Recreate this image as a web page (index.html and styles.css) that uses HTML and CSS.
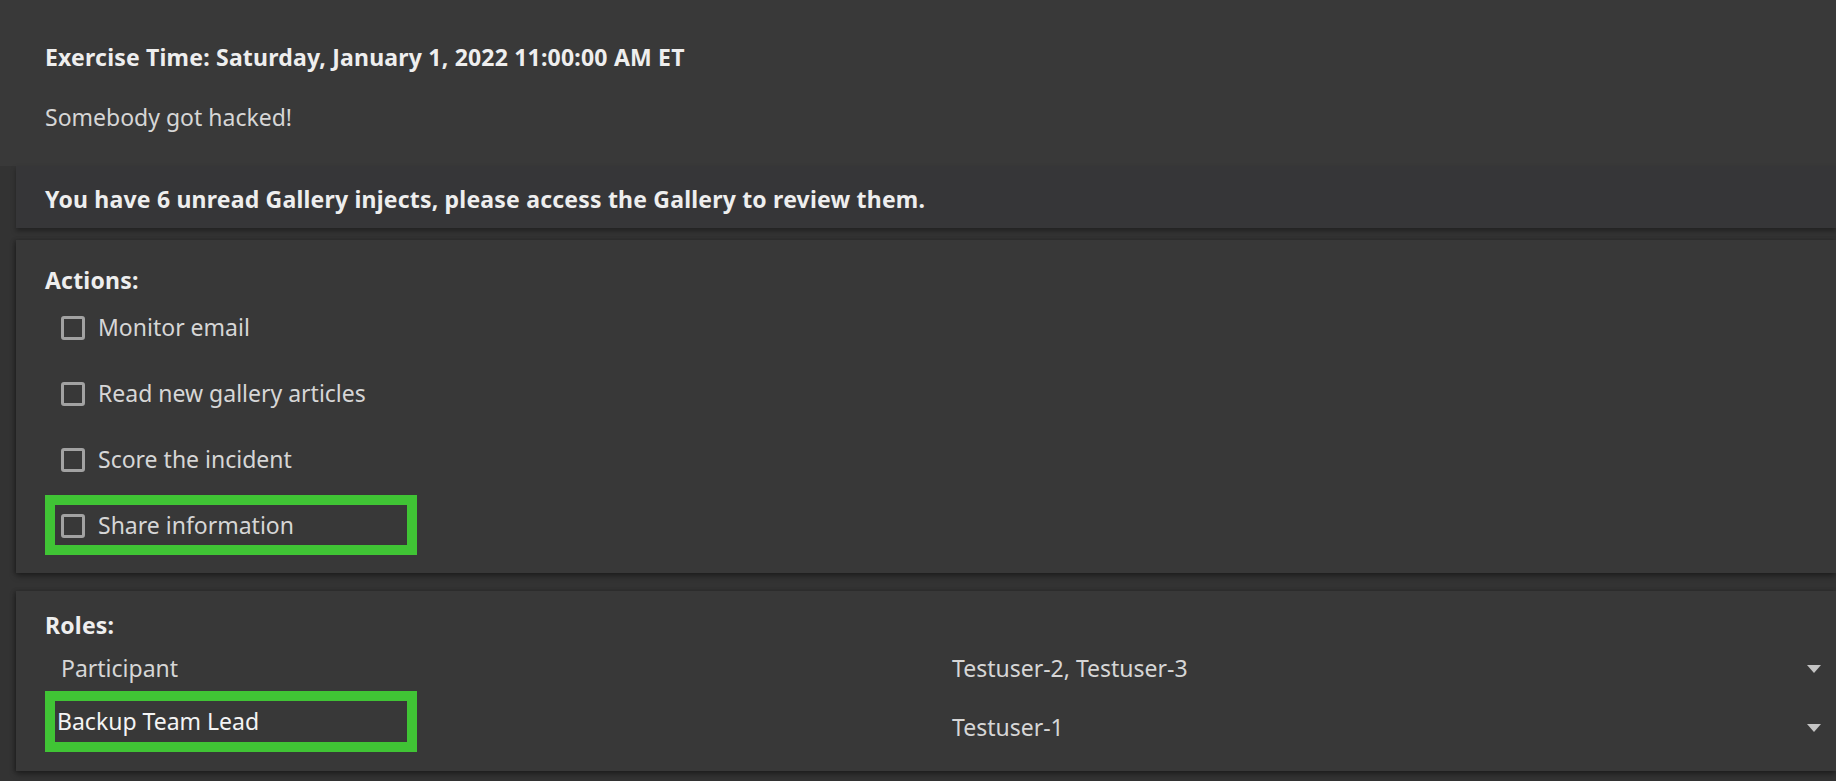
FILE: index.html
```html
<!DOCTYPE html>
<html lang="en">
<head>
<meta charset="utf-8">
<title>Exercise</title>
<link rel="stylesheet" href="styles.css">
</head>
<body>
  <div class="top">
    <p class="time">Exercise Time: Saturday, January 1, 2022 11:00:00 AM ET</p>
    <p class="msg">Somebody got hacked!</p>
  </div>

  <div class="inject">You have 6 unread Gallery injects, please access the Gallery to review them.</div>

  <section class="card actions">
    <h3 class="card-title">Actions:</h3>
    <ul class="action-list">
      <li class="action"><span class="box"></span><span class="label">Monitor email</span></li>
      <li class="action"><span class="box"></span><span class="label">Read new gallery articles</span></li>
      <li class="action"><span class="box"></span><span class="label">Score the incident</span></li>
      <li class="action"><span class="highlight hl-action"></span><span class="box"></span><span class="label">Share information</span></li>
    </ul>
  </section>

  <section class="card roles">
    <h3 class="card-title">Roles:</h3>
    <div class="role-grid">
      <div class="role-name">Participant</div>
      <div class="role-users"><span>Testuser-2, Testuser-3</span><span class="caret"></span></div>
      <div class="role-name role-input"><span class="highlight hl-role"></span>Backup Team Lead</div>
      <div class="role-users second"><span>Testuser-1</span><span class="caret"></span></div>
    </div>
  </section>
</body>
</html>
```

FILE: styles.css
```css
html, body {
  margin: 0;
  padding: 0;
}

body {
  background: #333333;
  font-family: "Noto Sans", "Open Sans", sans-serif;
  font-size: 23px;
  line-height: 30px;
  color: #d6d6d6;
  overflow: hidden;
  height: 781px;
}

.top {
  background: #393939;
  padding: 42px 45px 34px;
}

.top p {
  margin: 0;
}

.time {
  font-weight: 700;
  letter-spacing: 0.2px;
  color: #eeeeee;
}

.msg {
  margin-top: 30px !important;
  color: #d6d6d6;
}

.inject {
  margin-left: 16px;
  background: #363638;
  padding: 18px 29px 14px;
  font-weight: 700;
  letter-spacing: 0.2px;
  color: #eeeeee;
  box-shadow: 0 3px 5px rgba(0, 0, 0, 0.35);
  position: relative;
}

.card {
  margin-left: 16px;
  background: #383838;
  box-shadow: 0 3px 6px rgba(0, 0, 0, 0.4), -2px 0 4px rgba(0, 0, 0, 0.2);
}

.actions {
  margin-top: 12px;
  padding: 25px 0 14px 29px;
}

.card-title {
  margin: 0;
  font-size: 23px;
  line-height: 30px;
  font-weight: 700;
  letter-spacing: 0.2px;
  color: #eeeeee;
}

.action-list {
  list-style: none;
  margin: 0;
  padding: 0;
}

.action {
  position: relative;
  display: flex;
  align-items: center;
  height: 66px;
  padding-left: 16px;
  padding-bottom: 3px;
  box-sizing: border-box;
}

.box {
  width: 24px;
  height: 24px;
  box-sizing: border-box;
  border: 3px solid #a2a2a2;
  border-radius: 3px;
  margin-right: 13px;
  margin-top: 2px;
  flex: none;
}

.label {
  color: #d6d6d6;
}

.highlight {
  position: absolute;
  box-sizing: border-box;
  border: 10px solid #40c435;
  width: 372px;
  height: 60px;
  pointer-events: none;
}

.hl-action {
  left: 0;
  top: 2px;
}

.roles {
  margin-top: 18px;
  padding: 19px 0 29px 29px;
}

.role-grid {
  display: grid;
  grid-template-columns: 892px 1fr;
}

.role-name {
  position: relative;
  padding: 13px 0 8px 16px;
  color: #d6d6d6;
}

.role-input {
  padding: 15px 0 0 12px;
  color: #f4f4f4;
}

.hl-role {
  left: 0;
  top: 0;
  height: 61px;
}

.role-users {
  display: flex;
  justify-content: space-between;
  align-items: center;
  padding: 13px 15px 8px 15px;
  color: #d6d6d6;
}

.role-users.second {
  padding-top: 21px;
  padding-bottom: 0;
}

.caret {
  width: 0;
  height: 0;
  border-left: 7px solid transparent;
  border-right: 7px solid transparent;
  border-top: 8px solid #c4c4c4;
  margin-top: 2px;
}
```
